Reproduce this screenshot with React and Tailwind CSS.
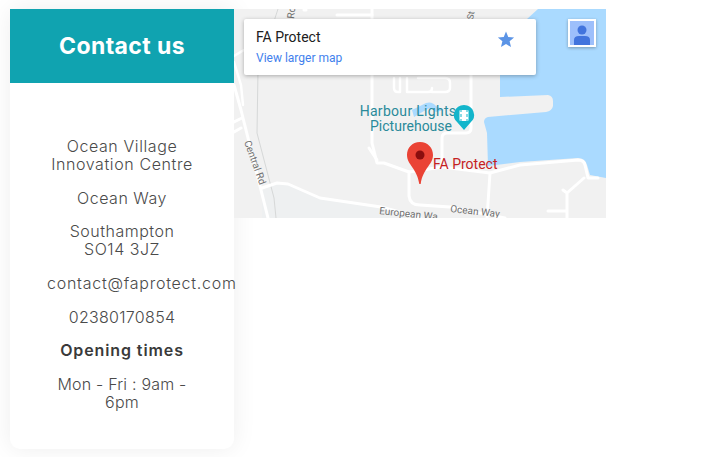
function MapRoads() {
  return (
    <svg className="absolute inset-0" width="372" height="209" viewBox="234 9 372 209">
      <rect x="234" y="9" width="372" height="209" fill="#f1f1f1" />
      <path d="M262 190L278 183L288 184L320 199L381 208L420 218H262Z" fill="#eef0f1" />
      {/* water */}
      <path d="M538 9L527 19L500 50V97L548 95Q553 96 553 101V106Q552 111 546 112L488 117Q484 118 484 122L487 133L488 166L520 162L578 158Q585 158 587 165L590 175L606 178V9Z" fill="#aadaff" />
      <path d="M412 110Q420 106 426 103Q432 101 436 106L444 110L436 112L430 108L424 111L414 117Z" fill="#aadaff" />
      {/* thin paths */}
      <g fill="none" stroke="#d6d8d8" strokeWidth="1">
        <path d="M278 9L258 70L257 133L274 198L276 218" />
      </g>
      {/* roads */}
      <g fill="none" stroke="#ffffff" strokeWidth="3" strokeLinecap="round" strokeLinejoin="round">
        <path d="M234 85L241 110L268 218" />
        <path d="M234 122L242 118M234 132L241 128" />
        <path d="M234 56L244 50M234 62L241 85L243 105" strokeWidth="2.5" />
        <path d="M262 188L277 183L288 184L320 198L381 207L400 212L420 218" />
        <path d="M372 9V143L377 163L384 163L409 172V196Q410 205 420 205L450 207L505 218" />
        <path d="M369 148L377 160" />
        <path d="M409 172L442 167V138Q442 133 447 133H466Q471 133 471 128V75" />
        <path d="M442 167L490 173L520 165L578 160Q584 160 585 165L588 178H598" />
        <path d="M490 173L487 218" />
        <path d="M584 178L567 193V218M563 190L567 193M548 211H567" />
        <path d="M337 15H372M304 10H306" />
        <path d="M394 78V88Q394 92 398 92H400V78M407 78V92H428Q432 92 432 88M418 78H445Q450 78 450 83V88Q450 92 445 92H432" strokeWidth="2.5" />
      </g>
      {/* road labels */}
      <g fontFamily="Roboto, sans-serif" fontSize="10" fill="#6f6f6f">
        <text transform="translate(294 19) rotate(-84)">Ro</text>
        <text transform="translate(473 20) rotate(-80)" fontSize="9">St</text>
        <text transform="translate(244 142) rotate(70)">Central Rd</text>
        <text transform="translate(379 214) rotate(6)">European Wa</text>
        <text transform="translate(450 212) rotate(6)">Ocean Way</text>
      </g>
      {/* poi */}
      <text fontFamily="Roboto, sans-serif" fontSize="14" fill="#2a8a9a" textAnchor="middle">
        <tspan x="408" y="116" letterSpacing="0.3">Harbour Lights</tspan>
        <tspan x="411" y="131">Picturehouse</tspan>
      </text>
      <path d="M464 105a10 10 0 0 1 6.500 17.600L464 130l-6.500-7.400A10 10 0 0 1 464 105Z" fill="#12b5cb" />
      <rect x="459.500" y="110" width="9" height="11" rx="1" fill="#ffffff" />
      <path d="M461 110v2M461 114v3M461 119v2M467 110v2M467 114v3M467 119v2" stroke="#12b5cb" strokeWidth="1" />
      {/* pin */}
      <path d="M420 142C412 142 407 148 407 155C407 165 417 168 419.300 184H420.700C423 168 433 165 433 155C433 148 428 142 420 142Z" fill="#ea4335" />
      <circle cx="420" cy="155" r="4.500" fill="#8a0e0e" />
      <text x="433" y="169" fontFamily="Roboto, sans-serif" fontSize="14" fill="#c5221f">FA Protect</text>
    </svg>
  );
}

function InfoCard() {
  return (
    <div className="absolute left-[10px] top-[10px] w-[292px] h-[56px] bg-white rounded-[2px] shadow-[0_1px_4px_rgba(0,0,0,0.3)] pl-3 pr-[21px] pt-[9px] flex justify-between font-['Roboto',sans-serif]">
      <div>
        <div className="text-[14px] leading-[18px] text-[#202020]">FA Protect</div>
        <div className="text-[12px] leading-[16px] mt-[4px] text-[#427fed]">View larger map</div>
      </div>
      <svg width="18" height="18" viewBox="0 0 24 24" className="mt-[2px]">
        <path d="M12 2l3 7.400 7.800.600-6 5.100 1.900 7.700L12 18.600 5.300 22.800l1.900-7.700-6-5.100L9 9.400Z" fill="#5b94e6" />
      </svg>
    </div>
  );
}

function Avatar() {
  return (
    <div className="absolute right-[10px] top-[10px] w-[28px] h-[28px] border-2 border-white bg-[#9dbffb] shadow-[0_1px_3px_rgba(0,0,0,0.3)]">
      <svg width="24" height="24" viewBox="0 0 24 24">
        <circle cx="12" cy="9" r="4.500" fill="#4274dd" />
        <path d="M4 24V19Q4 15 9 15H15Q20 15 20 19V24Z" fill="#4274dd" />
      </svg>
    </div>
  );
}

export default function App() {
  return (
    <div className="bg-white min-h-[457px] pt-[9px] pl-[10px] flex items-start overflow-hidden">
      <div className="w-[224px] h-[440px] bg-white rounded-b-[10px] shadow-[0_0_24px_rgba(0,0,0,0.07)] font-['Inter',sans-serif]">
        <div className="h-[74px] bg-[#10a3b0] flex items-center justify-center">
          <h1 className="text-[23px] font-bold text-white tracking-[0.4px]">Contact us</h1>
        </div>
        <div className="px-[37px] pt-[54px] text-center text-[16px] font-light leading-[18px] tracking-[0.5px] text-[#4a4a4a]">
          <p className="tracking-[0.6px]">Ocean Village<br />Innovation Centre</p>
          <p className="mt-[16px]">Ocean Way</p>
          <p className="mt-[15px]">Southampton<br />SO14 3JZ</p>
          <p className="mt-[16px] whitespace-nowrap tracking-[0.75px]">contact@faprotect.com</p>
          <p className="mt-[16px] tracking-[0.3px]">02380170854</p>
          <p className="mt-[15px] font-semibold text-[#3a3a3a] tracking-[0.9px]">Opening times</p>
          <p className="mt-[16px] tracking-[0.2px]">Mon - Fri : 9am -<br />6pm</p>
        </div>
      </div>
      <div className="relative w-[372px] h-[209px] shrink-0">
        <MapRoads />
        <InfoCard />
        <Avatar />
      </div>
    </div>
  );
}
